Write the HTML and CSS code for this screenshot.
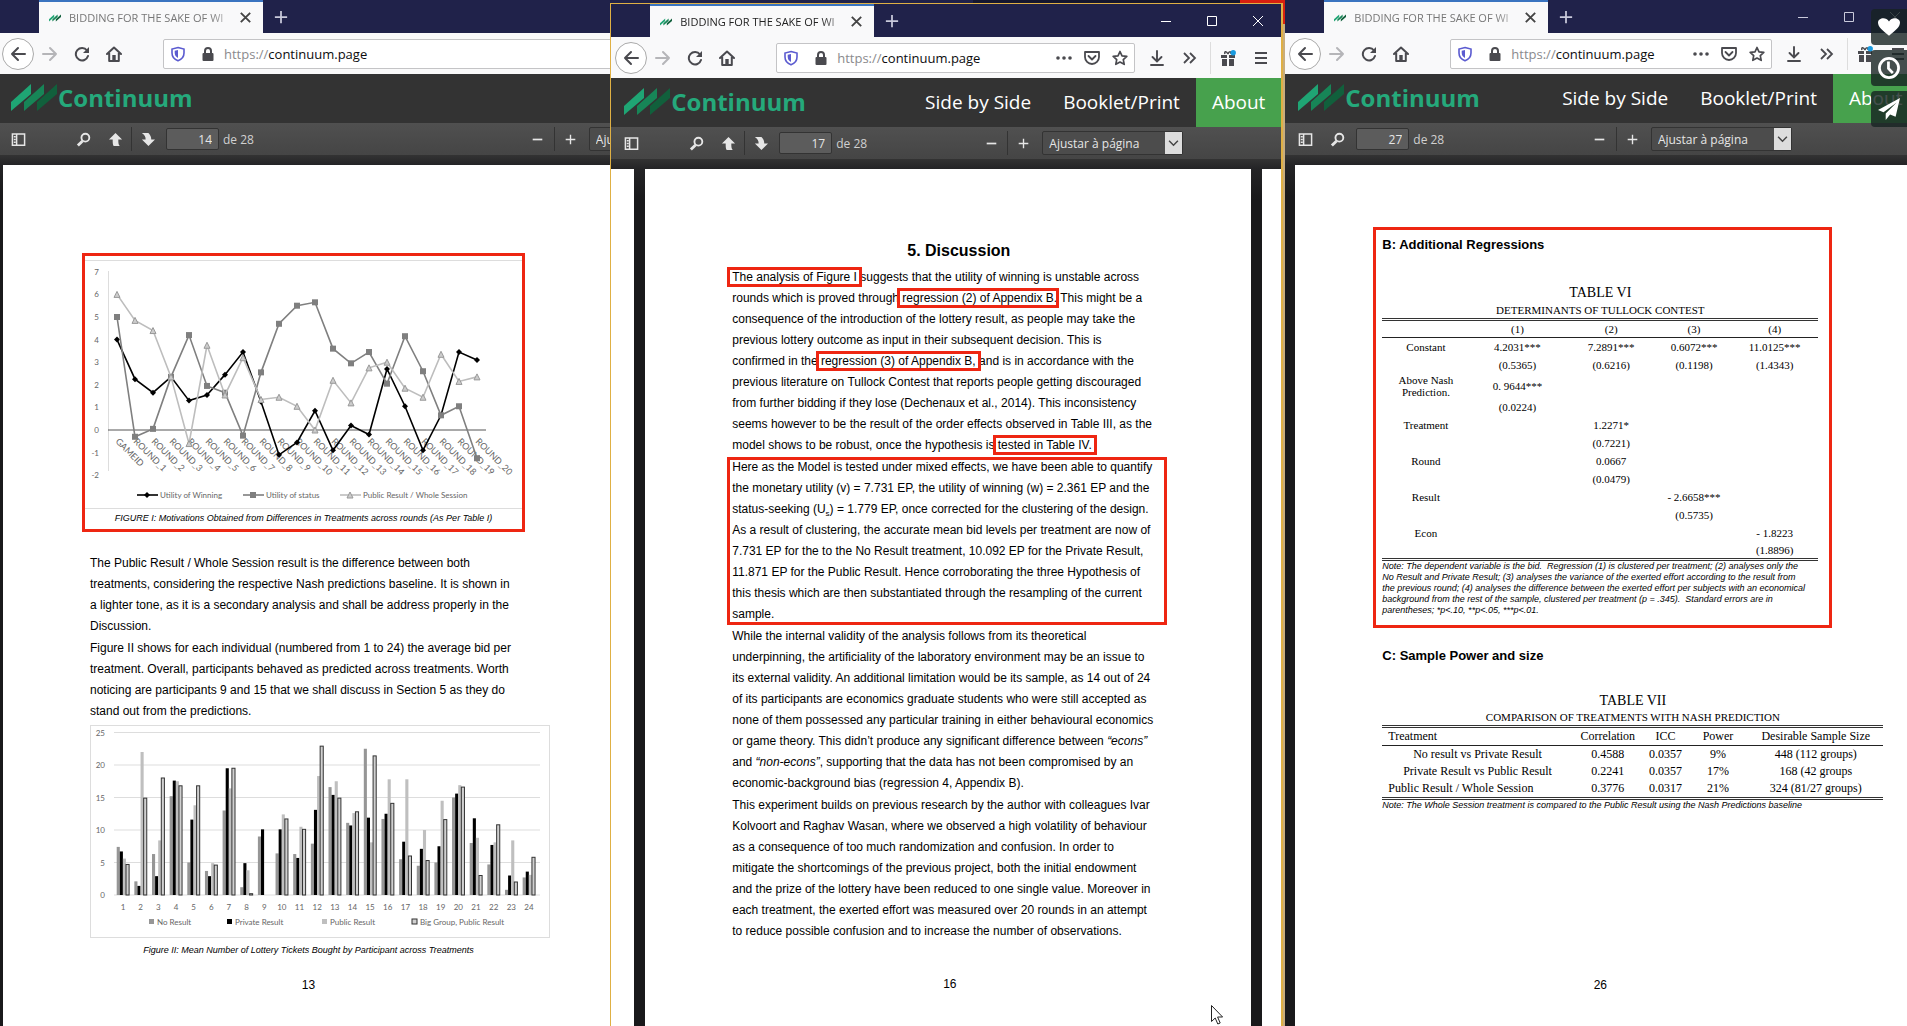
FILE: index.html
```html
<!DOCTYPE html>
<html lang="en">
<head>
  <meta charset="UTF-8">
  <title>Continuum</title>
  <meta name="viewport" content="width=device-width, initial-scale=1.0">
  <link rel="stylesheet" href="styles.css">
</head>
<body>

  <!-- Shared icons -->
  <svg class="sprite" aria-hidden="true">
    <symbol id="i-logo" viewBox="0 0 46 27"><path fill="#1fa574" d="M0 18 20 0v10L0 27z"/><path fill="#178557" d="M13 18 33 0v10L13 27z"/><path fill="#11603c" d="M26 18 46 0v10L26 27z"/></symbol>
    <symbol id="i-back" viewBox="0 0 16 16"><path d="M15 8H2M8 2 2 8l6 6" fill="none" stroke="currentColor" stroke-width="2" stroke-linecap="round" stroke-linejoin="round"/></symbol>
    <symbol id="i-forward" viewBox="0 0 16 16"><path d="M1 8h13M8 2l6 6-6 6" fill="none" stroke="currentColor" stroke-width="2" stroke-linecap="round" stroke-linejoin="round"/></symbol>
    <symbol id="i-reload" viewBox="0 0 16 16"><path d="M13 4.500A6.200 6.200 0 1 0 14 10" fill="none" stroke="currentColor" stroke-width="2" stroke-linecap="round"/><path d="M15 1v6H9z" fill="currentColor"/></symbol>
    <symbol id="i-home" viewBox="0 0 16 16"><path d="M1 8 8 1.500 15 8M3.200 7v8h9.600V7" fill="none" stroke="currentColor" stroke-width="2" stroke-linecap="round" stroke-linejoin="round"/><path d="M6.300 9h3.400v6H6.300z" fill="currentColor"/></symbol>
    <symbol id="i-shield" viewBox="0 0 16 16"><path d="M8 1.500 14 3v4c0 4-2.500 6.500-6 7.800C4.500 13.500 2 11 2 7V3z" fill="none" stroke="currentColor" stroke-width="1.600"/><path d="M8 4v8c-2-1-3.300-2.700-3.300-5V4.700z" fill="currentColor"/></symbol>
    <symbol id="i-lock" viewBox="0 0 16 16"><path d="M5 8V5a3 3 0 0 1 6 0v3" fill="none" stroke="currentColor" stroke-width="2"/><rect x="2.500" y="7" width="11" height="8" rx="1" fill="currentColor"/></symbol>
    <symbol id="i-dots" viewBox="0 0 16 16"><g fill="currentColor"><circle cx="2" cy="8" r="1.800"/><circle cx="8" cy="8" r="1.800"/><circle cx="14" cy="8" r="1.800"/></g></symbol>
    <symbol id="i-pocket" viewBox="0 0 16 16"><path d="M1 2h14v5a7 7 0 0 1-14 0zM4.500 6 8 9.500 11.500 6" fill="none" stroke="currentColor" stroke-width="1.800" stroke-linecap="round" stroke-linejoin="round"/></symbol>
    <symbol id="i-star" viewBox="0 0 16 16"><path d="m8 1.500 2 4.300 4.800.6-3.500 3.200.9 4.700L8 12l-4.200 2.300.9-4.700L1.200 6.400 6 5.800z" fill="none" stroke="currentColor" stroke-width="1.700" stroke-linejoin="round"/></symbol>
    <symbol id="i-download" viewBox="0 0 16 16"><path d="M8 1v10M3.500 7 8 11.500 12.500 7M2 15h12" fill="none" stroke="currentColor" stroke-width="1.900" stroke-linecap="round"/></symbol>
    <symbol id="i-more" viewBox="0 0 16 16"><path d="m3 3 5 5-5 5M9 3l5 5-5 5" fill="none" stroke="currentColor" stroke-width="1.800"/></symbol>
    <symbol id="i-gift" viewBox="0 0 16 16"><path d="M1 5h6v3H1zM9 5h6v3H9zM2 9h5v7H2zM9 9h5v7H9z" fill="currentColor"/><path d="M8 4C6 0 4 2 5 4M8 4c1-3 3-3 3 0" fill="none" stroke="currentColor" stroke-width="1.500"/><circle cx="13.200" cy="2.800" r="2.700" fill="#1a9be0"/></symbol>
    <symbol id="i-menu" viewBox="0 0 16 16"><path d="M2 3h12M2 8h12M2 13h12" stroke="currentColor" stroke-width="1.800"/></symbol>
    <symbol id="i-plus" viewBox="0 0 16 16"><path d="M8 1v14M1 8h14" stroke="currentColor" stroke-width="2"/></symbol>
    <symbol id="i-minus" viewBox="0 0 16 16"><path d="M1 8h14" stroke="currentColor" stroke-width="2.500"/></symbol>
    <symbol id="i-close" viewBox="0 0 16 16"><path d="m3 3 10 10M13 3 3 13" stroke="currentColor" stroke-width="2"/></symbol>
    <symbol id="i-winmin" viewBox="0 0 10 10"><path d="M0 5.500h10" stroke="currentColor"/></symbol>
    <symbol id="i-winmax" viewBox="0 0 10 10"><path d="M.5.5h9v9h-9z" fill="none" stroke="currentColor"/></symbol>
    <symbol id="i-winclose" viewBox="0 0 10 10"><path d="m0 0 10 10M10 0 0 10" stroke="currentColor"/></symbol>
    <symbol id="i-sidebar" viewBox="0 0 16 16"><path d="M1.500 2h13v12h-13zM6 2v12M3 5h2M3 8h2M3 11h2" fill="none" stroke="currentColor" stroke-width="1.600"/></symbol>
    <symbol id="i-search" viewBox="0 0 16 16"><circle cx="10" cy="6" r="4.200" fill="none" stroke="currentColor" stroke-width="2"/><path d="m7 9.500-5 5" stroke="currentColor" stroke-width="3"/></symbol>
    <symbol id="i-up" viewBox="0 0 16 16"><path d="m8 1 7 7h-4c0 3 0 5 1.500 7H6c-1-2-1-4-1-7H1z" fill="currentColor"/></symbol>
    <symbol id="i-down" viewBox="0 0 16 16"><path d="m9 15 7-7h-4c0-3-1-5-3-7H2c3 2 4 4 4 7H2z" fill="currentColor"/></symbol>
    <symbol id="i-chevron" viewBox="0 0 10 10"><path d="m1 3 4 4 4-4" fill="none" stroke="currentColor" stroke-width="1.300"/></symbol>
    <symbol id="i-heart" viewBox="0 0 20 20"><path d="M10 18C4 13 0 10 0 6c0-4 7-6 10-1 3-5 10-3 10 1 0 4-4 7-10 12z" fill="currentColor"/></symbol>
    <symbol id="i-clock" viewBox="0 0 20 20"><circle cx="10" cy="10" r="8.700" fill="none" stroke="currentColor" stroke-width="2.500"/><path d="M9.500 4v6.500l4 4" fill="none" stroke="currentColor" stroke-width="2.500"/></symbol>
    <symbol id="i-plane" viewBox="0 0 20 20"><path d="m20 0-4 17-5-2-4 5v-6L17 4 5 13l-5-2z" fill="currentColor"/></symbol>
  </svg>

  <div class="desktop">

    <!-- Left window -->
    <section class="window window-left">
      <div class="tabstrip">
        <div class="tab">
          <svg class="favicon"><use href="#i-logo"/></svg>
          <span class="tab-title">BIDDING FOR THE SAKE OF WI</span>
          <button class="tab-close" aria-label="Close tab"><svg><use href="#i-close"/></svg></button>
        </div>
        <button class="tab-new" aria-label="New tab"><svg><use href="#i-plus"/></svg></button>
      </div>
      <div class="navbar">
        <button class="nav-btn nav-back" aria-label="Back"><svg><use href="#i-back"/></svg></button>
        <button class="nav-btn nav-off" aria-label="Forward"><svg><use href="#i-forward"/></svg></button>
        <button class="nav-btn" aria-label="Reload"><svg><use href="#i-reload"/></svg></button>
        <button class="nav-btn" aria-label="Home"><svg><use href="#i-home"/></svg></button>
        <div class="urlbar">
          <svg class="shield"><use href="#i-shield"/></svg>
          <svg class="lock"><use href="#i-lock"/></svg>
          <span class="url"><span>https://</span>continuum.page</span>
        </div>
      </div>
      <header class="site-header">
        <a class="brand" href="#"><svg><use href="#i-logo"/></svg>Continuum</a>
      </header>
      <div class="pdfbar">
        <button class="pdf-btn" aria-label="Sidebar"><svg><use href="#i-sidebar"/></svg></button>
        <button class="pdf-btn pdf-find" aria-label="Find"><svg><use href="#i-search"/></svg></button>
        <button class="pdf-btn" aria-label="Previous page"><svg><use href="#i-up"/></svg></button>
        <button class="pdf-btn pdf-split" aria-label="Next page"><svg><use href="#i-down"/></svg></button>
        <label class="page-no"><input type="text" value="14"> de 28</label>
        <span class="grow-before"></span>
        <button class="pdf-btn" aria-label="Zoom out"><svg class="small"><use href="#i-minus"/></svg></button>
        <button class="pdf-btn pdf-split" aria-label="Zoom in"><svg class="small"><use href="#i-plus"/></svg></button>
        <span class="zoom-select"><select aria-label="Zoom"><option>Ajustar à página</option></select><svg><use href="#i-chevron"/></svg></span>
        <span class="grow-after"></span>
      </div>
      <main class="viewer">
        <article class="page page-left">
          <figure class="marked figure-one">
            <svg id="line-chart" viewBox="0 0 437 249" role="img" aria-label="Motivations across rounds"></svg>
            <figcaption>FIGURE I: Motivations Obtained from Differences in Treatments across rounds (As Per Table I)</figcaption>
          </figure>
          <p>The Public Result / Whole Session result is the difference between both<br>
            treatments, considering the respective Nash predictions baseline. It is shown in<br>
            a lighter tone, as it is a secondary analysis and shall be address properly in the<br>
            Discussion.</p>
          <p>Figure II shows for each individual (numbered from 1 to 24) the average bid per<br>
            treatment. Overall, participants behaved as predicted across treatments. Worth<br>
            noticing are participants 9 and 15 that we shall discuss in Section 5 as they do<br>
            stand out from the predictions.</p>
          <figure class="figure-two">
            <svg id="bar-chart" viewBox="0 0 460 213" role="img" aria-label="Lottery tickets per participant"></svg>
            <figcaption>Figure II: Mean Number of Lottery Tickets Bought by Participant across Treatments</figcaption>
          </figure>
          <footer class="folio">13</footer>
        </article>
      </main>
    </section>

    <!-- Right window -->
    <section class="window window-right">
      <div class="tabstrip">
        <div class="tab">
          <svg class="favicon"><use href="#i-logo"/></svg>
          <span class="tab-title">BIDDING FOR THE SAKE OF WI</span>
          <button class="tab-close" aria-label="Close tab"><svg><use href="#i-close"/></svg></button>
        </div>
        <button class="tab-new" aria-label="New tab"><svg><use href="#i-plus"/></svg></button>
        <div class="win-controls">
          <button aria-label="Minimize"><svg><use href="#i-winmin"/></svg></button>
          <button aria-label="Maximize"><svg><use href="#i-winmax"/></svg></button>
          <button aria-label="Close"><svg><use href="#i-winclose"/></svg></button>
        </div>
      </div>
      <div class="navbar">
        <button class="nav-btn nav-back" aria-label="Back"><svg><use href="#i-back"/></svg></button>
        <button class="nav-btn nav-off" aria-label="Forward"><svg><use href="#i-forward"/></svg></button>
        <button class="nav-btn" aria-label="Reload"><svg><use href="#i-reload"/></svg></button>
        <button class="nav-btn" aria-label="Home"><svg><use href="#i-home"/></svg></button>
        <div class="urlbar">
          <svg class="shield"><use href="#i-shield"/></svg>
          <svg class="lock"><use href="#i-lock"/></svg>
          <span class="url"><span>https://</span>continuum.page</span>
          <svg class="url-icon"><use href="#i-dots"/></svg>
          <svg class="url-icon"><use href="#i-pocket"/></svg>
          <svg class="url-icon"><use href="#i-star"/></svg>
        </div>
        <button class="nav-btn" aria-label="Downloads"><svg><use href="#i-download"/></svg></button>
        <button class="nav-btn" aria-label="More tools"><svg><use href="#i-more"/></svg></button>
        <button class="nav-btn nav-gift" aria-label="What's new"><svg><use href="#i-gift"/></svg></button>
        <button class="nav-btn" aria-label="Menu"><svg><use href="#i-menu"/></svg></button>
      </div>
      <header class="site-header">
        <a class="brand" href="#"><svg><use href="#i-logo"/></svg>Continuum</a>
        <nav>
          <a href="#">Side by Side</a>
          <a href="#">Booklet/Print</a>
          <a class="active" href="#">About</a>
        </nav>
      </header>
      <div class="pdfbar">
        <button class="pdf-btn" aria-label="Sidebar"><svg><use href="#i-sidebar"/></svg></button>
        <button class="pdf-btn" aria-label="Find"><svg><use href="#i-search"/></svg></button>
        <label class="page-no"><input type="text" value="27"> de 28</label>
        <span class="grow-before"></span>
        <button class="pdf-btn" aria-label="Zoom out"><svg class="small"><use href="#i-minus"/></svg></button>
        <button class="pdf-btn pdf-split" aria-label="Zoom in"><svg class="small"><use href="#i-plus"/></svg></button>
        <span class="zoom-select"><select aria-label="Zoom"><option>Ajustar à página</option></select><svg><use href="#i-chevron"/></svg></span>
        <span class="grow-after"></span>
      </div>
      <main class="viewer">
        <article class="page page-right">
          <section class="marked regressions">
            <h2>B: Additional Regressions</h2>
            <table class="table-six">
              <caption>TABLE VI<small>DETERMINANTS OF TULLOCK CONTEST</small></caption>
              <colgroup><col class="c20"><col class="c22"><col class="c21"><col class="c17"><col class="c20"></colgroup>
              <thead>
                <tr><th></th><th>(1)</th><th>(2)</th><th>(3)</th><th>(4)</th></tr>
              </thead>
              <tbody>
                <tr><td>Constant</td><td>4.2031***</td><td>7.2891***</td><td>0.6072***</td><td>11.0125***</td></tr>
                <tr><td></td><td>(0.5365)</td><td>(0.6216)</td><td>(0.1198)</td><td>(1.4343)</td></tr>
                <tr class="tall"><td>Above Nash<br>Prediction.</td><td>0. 9644***</td><td></td><td></td><td></td></tr>
                <tr><td></td><td>(0.0224)</td><td></td><td></td><td></td></tr>
                <tr><td>Treatment</td><td></td><td>1.2271*</td><td></td><td></td></tr>
                <tr><td></td><td></td><td>(0.7221)</td><td></td><td></td></tr>
                <tr><td>Round</td><td></td><td>0.0667</td><td></td><td></td></tr>
                <tr><td></td><td></td><td>(0.0479)</td><td></td><td></td></tr>
                <tr><td>Result</td><td></td><td></td><td>- 2.6658***</td><td></td></tr>
                <tr><td></td><td></td><td></td><td>(0.5735)</td><td></td></tr>
                <tr><td>Econ</td><td></td><td></td><td></td><td>- 1.8223</td></tr>
                <tr><td></td><td></td><td></td><td></td><td>(1.8896)</td></tr>
              </tbody>
            </table>
            <p class="note">Note: The dependent variable is the bid.&nbsp; Regression (1) is clustered per treatment; (2) analyses only the<br>
              No Result and Private Result; (3) analyses the variance of the exerted effort according to the result from<br>
              the previous round; (4) analyses the difference between the exerted effort per subjects with an economical<br>
              background from the rest of the sample, clustered per treatment (p = .345).&nbsp; Standard errors are in<br>
              parentheses; *p&lt;.10, **p&lt;.05, ***p&lt;.01.</p>
          </section>
          <section class="power">
            <h2>C: Sample Power and size</h2>
            <table class="table-seven">
              <caption>TABLE VII<small>COMPARISON OF TREATMENTS WITH NASH PREDICTION</small></caption>
              <colgroup><col class="c38"><col class="c14"><col class="c9"><col class="c12"><col class="c27"></colgroup>
              <thead>
                <tr><th class="lead">Treatment</th><th>Correlation</th><th>ICC</th><th>Power</th><th>Desirable Sample Size</th></tr>
              </thead>
              <tbody>
                <tr><td>No result vs Private Result</td><td>0.4588</td><td>0.0357</td><td>9%</td><td>448 (112 groups)</td></tr>
                <tr><td>Private Result vs Public Result</td><td>0.2241</td><td>0.0357</td><td>17%</td><td>168 (42 groups</td></tr>
                <tr><td class="lead">Public Result / Whole Session</td><td>0.3776</td><td>0.0317</td><td>21%</td><td>324 (81/27 groups)</td></tr>
              </tbody>
            </table>
            <p class="note">Note: The Whole Session treatment is compared to the Public Result using the Nash Predictions baseline</p>
          </section>
          <footer class="folio">26</footer>
        </article>
      </main>
    </section>

    <!-- Middle window, on top of the others -->
    <section class="window window-middle">
      <div class="tabstrip">
        <div class="tab">
          <svg class="favicon"><use href="#i-logo"/></svg>
          <span class="tab-title">BIDDING FOR THE SAKE OF WI</span>
          <button class="tab-close" aria-label="Close tab"><svg><use href="#i-close"/></svg></button>
        </div>
        <button class="tab-new" aria-label="New tab"><svg><use href="#i-plus"/></svg></button>
        <div class="win-controls">
          <button aria-label="Minimize"><svg><use href="#i-winmin"/></svg></button>
          <button aria-label="Maximize"><svg><use href="#i-winmax"/></svg></button>
          <button aria-label="Close"><svg><use href="#i-winclose"/></svg></button>
        </div>
      </div>
      <div class="navbar">
        <button class="nav-btn nav-back" aria-label="Back"><svg><use href="#i-back"/></svg></button>
        <button class="nav-btn nav-off" aria-label="Forward"><svg><use href="#i-forward"/></svg></button>
        <button class="nav-btn" aria-label="Reload"><svg><use href="#i-reload"/></svg></button>
        <button class="nav-btn" aria-label="Home"><svg><use href="#i-home"/></svg></button>
        <div class="urlbar">
          <svg class="shield"><use href="#i-shield"/></svg>
          <svg class="lock"><use href="#i-lock"/></svg>
          <span class="url"><span>https://</span>continuum.page</span>
          <svg class="url-icon"><use href="#i-dots"/></svg>
          <svg class="url-icon"><use href="#i-pocket"/></svg>
          <svg class="url-icon"><use href="#i-star"/></svg>
        </div>
        <button class="nav-btn" aria-label="Downloads"><svg><use href="#i-download"/></svg></button>
        <button class="nav-btn" aria-label="More tools"><svg><use href="#i-more"/></svg></button>
        <button class="nav-btn nav-gift" aria-label="What's new"><svg><use href="#i-gift"/></svg></button>
        <button class="nav-btn" aria-label="Menu"><svg><use href="#i-menu"/></svg></button>
      </div>
      <header class="site-header">
        <a class="brand" href="#"><svg><use href="#i-logo"/></svg>Continuum</a>
        <nav>
          <a href="#">Side by Side</a>
          <a href="#">Booklet/Print</a>
          <a class="active" href="#">About</a>
        </nav>
      </header>
      <div class="pdfbar">
        <button class="pdf-btn" aria-label="Sidebar"><svg><use href="#i-sidebar"/></svg></button>
        <button class="pdf-btn pdf-find" aria-label="Find"><svg><use href="#i-search"/></svg></button>
        <button class="pdf-btn" aria-label="Previous page"><svg><use href="#i-up"/></svg></button>
        <button class="pdf-btn pdf-split" aria-label="Next page"><svg><use href="#i-down"/></svg></button>
        <label class="page-no"><input type="text" value="17"> de 28</label>
        <span class="grow-before"></span>
        <button class="pdf-btn" aria-label="Zoom out"><svg class="small"><use href="#i-minus"/></svg></button>
        <button class="pdf-btn pdf-split" aria-label="Zoom in"><svg class="small"><use href="#i-plus"/></svg></button>
        <span class="zoom-select"><select aria-label="Zoom"><option>Ajustar à página</option></select><svg><use href="#i-chevron"/></svg></span>
        <span class="grow-after"></span>
      </div>
      <main class="viewer">
        <div class="page-edge"></div>
        <article class="page page-middle">
          <h1>5. Discussion</h1>
          <p><mark>The analysis of Figure I</mark> suggests that the utility of winning is unstable across<br>
            rounds which is proved through <mark>regression (2) of Appendix B</mark>. This might be a<br>
            consequence of the introduction of the lottery result, as people may take the<br>
            previous lottery outcome as input in their subsequent decision. This is<br>
            confirmed in the <mark>regression (3) of Appendix B,</mark> and is in accordance with the<br>
            previous literature on Tullock Contest that reports people getting discouraged<br>
            from further bidding if they lose (Dechenaux et al., 2014). This inconsistency<br>
            seems however to be the result of the order effects observed in Table III, as the<br>
            model shows to be robust, once the hypothesis is <mark>tested in Table IV.</mark></p>
          <p class="marked-text">Here as the Model is tested under mixed effects, we have been able to quantify<br>
            the monetary utility (v) = 7.731 EP, the utility of winning (w) = 2.361 EP and the<br>
            status-seeking (U<sub>s</sub>) = 1.779 EP, once corrected for the clustering of the design.<br>
            As a result of clustering, the accurate mean bid levels per treatment are now of<br>
            7.731 EP for the to the No Result treatment, 10.092 EP for the Private Result,<br>
            11.871 EP for the Public Result. Hence corroborating the three Hypothesis of<br>
            this thesis which are then substantiated through the resampling of the current<br>
            sample.</p>
          <p>While the internal validity of the analysis follows from its theoretical<br>
            underpinning, the artificiality of the laboratory environment may be an issue to<br>
            its external validity. An additional limitation would be its sample, as 14 out of 24<br>
            of its participants are economics graduate students who were still accepted as<br>
            none of them possessed any particular training in either behavioural economics<br>
            or game theory. This didn’t produce any significant difference between <em>“econs”</em><br>
            and <em>“non-econs”</em>, supporting that the data has not been compromised by an<br>
            economic-background bias (regression 4, Appendix B).</p>
          <p>This experiment builds on previous research by the author with colleagues Ivar<br>
            Kolvoort and Raghav Wasan, where we observed a high volatility of behaviour<br>
            as a consequence of too much randomization and confusion. In order to<br>
            mitigate the shortcomings of the previous project, both the initial endowment<br>
            and the prize of the lottery have been reduced to one single value. Moreover in<br>
            each treatment, the exerted effort was measured over 20 rounds in an attempt<br>
            to reduce possible confusion and to increase the number of observations.</p>
          <footer class="folio">16</footer>
        </article>
        <div class="page-edge"></div>
      </main>
      <svg class="cursor" viewBox="0 0 12 20"><path d="M.5.5v16l3.700-3.500 2.600 6 2.400-1-2.600-6h5z" fill="#fff" stroke="#222"/></svg>
    </section>

    <!-- Video player buttons -->
    <div class="player-buttons">
      <button aria-label="Like"><svg><use href="#i-heart"/></svg></button>
      <button aria-label="Watch later"><svg><use href="#i-clock"/></svg></button>
      <button aria-label="Share"><svg><use href="#i-plane"/></svg></button>
    </div>
  </div>

  <script src="charts.js"></script>
</body>
</html>
```

FILE: styles.css
```css
/* Basic styling */
* {
  box-sizing: border-box;
}
body {
  margin: 0;
  font-family: "Open Sans", sans-serif;
  color: #000;
}
button {
  display: flex;
  align-items: center;
  justify-content: center;
  flex: none;
  padding: 0;
  border: 0;
  background: none;
  color: inherit;
}
svg {
  display: block;
  flex: none;
  width: 16px;
  height: 16px;
}
.sprite {
  position: absolute;
  width: 0;
  height: 0;
}

/* Desktop and its windows */
.desktop {
  position: relative;
  height: 100vh;
  overflow: hidden;
  background:
    linear-gradient(to right, #15172f 65%, transparent 65%),
    linear-gradient(#d8200f 24px, #c9ad7c 24px);
}
.window {
  position: absolute;
  top: 0;
  bottom: 0;
  display: flex;
  flex-direction: column;
  overflow: hidden;
  background: #19191b;
}
.window-left {
  left: 0;
  width: 51%;
}
.window-middle {
  top: 3px;
  left: 32%;
  width: 35.300%;
  border: 1px solid #dfb044;
  border-right-width: 2px;
  border-bottom: 0;
}
.window-right {
  left: 67.400%;
  width: 33.200%;
}

/* Tab strip */
.tabstrip {
  display: flex;
  flex: none;
  height: 33px;
  padding-left: 39px;
  background: #20224a;
  color: #c9cadb;
}
.tab {
  display: flex;
  align-items: center;
  width: 224px;
  padding: 0 10px 0 10px;
  border-top: 2px solid #3a74c0;
  background: #f9f9fa;
  color: #777;
}
.window-middle .tab {
  color: #222;
}
.favicon {
  width: 12px;
  height: 8px;
  margin-right: 8px;
}
.tab-title {
  flex: 1;
  white-space: nowrap;
  font-size: 11px;
  -webkit-mask-image: linear-gradient(to right, #000 85%, rgba(0, 0, 0, 0.2));
  mask-image: linear-gradient(to right, #000 85%, rgba(0, 0, 0, 0.2));
}
.tab-close {
  margin-left: 4px;
  color: #444;
}
.tab-close svg {
  width: 15px;
  height: 15px;
}
.tab-new {
  width: 36px;
}
.tab-new svg {
  width: 14px;
  height: 14px;
}
.win-controls {
  display: flex;
  margin-left: auto;
}
.win-controls button {
  width: 46px;
}
.win-controls svg {
  width: 10px;
  height: 10px;
}
.window-middle .win-controls {
  color: #fff;
}

/* Browser toolbar */
.navbar {
  display: flex;
  align-items: center;
  flex: none;
  height: 41px;
  padding: 0 4px;
  background: #f9f9fa;
  color: #4a4a4f;
}
.window-left .navbar {
  padding-left: 2px;
}
.nav-btn {
  width: 32px;
  height: 32px;
}
.nav-back {
  border: 1px solid #aaa;
  border-radius: 50%;
  background: #fff;
}
.nav-off {
  color: #b5b5b8;
}
.nav-gift {
  width: 35px;
  margin-left: 5px;
  border-left: 1px solid #ddd;
}
.urlbar {
  display: flex;
  align-items: center;
  flex: 1;
  height: 30px;
  margin: 0 6px 0 33px;
  padding: 0 6px;
  border: 1px solid #c4c4c6;
  border-radius: 2px;
  background: #fff;
}
.shield {
  color: #5b5bd0;
}
.lock {
  margin: 0 8px 0 14px;
}
.url {
  flex: 1;
  font-size: 13px;
  color: #0c0c0d;
}
.url span {
  color: #8a8a8d;
}
.url-icon {
  margin-left: 12px;
}

/* Site header */
.site-header {
  display: flex;
  flex: none;
  height: 49px;
  padding-left: 13px;
  background: #333;
}
.window-left .site-header {
  padding-left: 11px;
}
.brand {
  display: flex;
  align-items: center;
  gap: 1px;
  padding-bottom: 2px;
  color: #25a97b;
  font-size: 24px;
  font-weight: 700;
  text-decoration: none;
}
.brand svg {
  width: 46px;
  height: 27px;
}
.site-header nav {
  display: flex;
  margin-left: auto;
}
.site-header nav a {
  padding: 0 16px;
  color: #fff;
  font-size: 19px;
  line-height: 48px;
  text-decoration: none;
}
.site-header nav .active {
  background: #47a14d;
}

/* PDF toolbar */
.pdfbar {
  display: flex;
  align-items: center;
  flex: none;
  height: 32px;
  padding-left: 4px;
  background: linear-gradient(#505050, #454545);
  color: #e6e6e6;
  font-size: 13px;
}
.window-left .pdfbar {
  padding-left: 2px;
}
.pdf-btn {
  width: 32px;
  height: 24px;
}
.pdf-btn svg {
  width: 15px;
  height: 15px;
}
.pdf-btn .small {
  width: 11px;
  height: 11px;
}
.pdf-find {
  margin-left: 33px;
}
.pdf-split {
  border-left: 1px solid #333;
}
.page-no {
  display: flex;
  align-items: center;
  gap: 4px;
  margin-left: 3px;
  color: #d0d0d0;
  font-size: 12px;
}
.page-no input {
  width: 53px;
  height: 22px;
  padding: 0 6px;
  border: 1px solid #333;
  border-radius: 2px;
  background: #5c5c5c;
  color: #e6e6e6;
  font: 12px "Open Sans", sans-serif;
  text-align: right;
}
.grow-before {
  flex: 117 1 0;
}
.grow-after {
  flex: 106 1 0;
}
.zoom-select {
  position: relative;
  margin-left: 3px;
}
.zoom-select select {
  display: block;
  width: 141px;
  height: 24px;
  padding: 0 6px;
  border: 1px solid #333;
  border-radius: 2px;
  appearance: none;
  background: #4c4c4c;
  color: #e6e6e6;
  font: 12px "Open Sans", sans-serif;
}
.zoom-select svg {
  position: absolute;
  top: 1px;
  right: 1px;
  width: 17px;
  height: 22px;
  padding: 0 3px;
  background: #ddd;
  color: #444;
  pointer-events: none;
}

/* PDF pages */
.viewer {
  display: flex;
  flex: 1;
  gap: 11px;
  padding: 10px 2px 0 3px;
  background: linear-gradient(#333 0, #242426 10px, #19191b 40px);
}
.window-right .viewer {
  padding: 10px 11px 0 10px;
}
.window-middle .viewer {
  padding: 10px 0 0;
}
.page {
  flex: 1;
  background: #fff;
  font-family: "Liberation Sans", Arial, sans-serif;
  font-size: 12px;
  line-height: 21px;
  white-space: nowrap;
}
.page-edge {
  flex: none;
  width: 23px;
  background: #fff;
}
.page-edge:last-child {
  width: 19px;
}
.page p {
  margin: 0 0 1px;
}
.page figure {
  margin: 0;
}
.page figcaption {
  font-size: 9px;
  font-style: italic;
  text-align: center;
  line-height: 18px;
}
.folio {
  text-align: center;
}

/* Red highlights */
.marked {
  border: 3px solid #ee2612;
}
.page .marked-text {
  margin-left: -5px;
  padding-left: 5px;
  outline: 3px solid #ee2612;
  outline-offset: -3px;
}
mark {
  margin: 0 -2px;
  padding: 0 2px;
  background: none;
  color: inherit;
  outline: 3px solid #ee2612;
}

/* Left page */
.page-left {
  flex: none;
  width: 612px;
  padding: 88px 0 0 87px;
}
.page .figure-one {
  width: 443px;
  height: 279px;
  margin: 0 0 21px -8px;
  padding-top: 4px;
}
.figure-one svg {
  width: 437px;
  height: 249px;
}
.figure-two {
  width: 460px;
  padding-top: 2px;
}
.figure-two svg {
  width: 460px;
  height: 213px;
}
.figure-two figcaption {
  width: 437px;
  line-height: 24px;
}
.page-left .folio {
  width: 437px;
  padding-top: 13px;
}

/* Middle page */
.page-middle {
  padding: 71px 84px 0 87px;
}
.page-middle h1 {
  margin: 0 0 5px;
  padding-left: 18px;
  font-size: 16px;
  line-height: 22px;
  text-align: center;
}
.page-middle sub {
  font-size: 8px;
  line-height: 0;
}
.page-middle .folio {
  padding-top: 31px;
}

/* Right page */
.page-right {
  padding: 62px 24px 0 78px;
}
.page-right h2 {
  margin: 0;
  font-size: 13px;
  line-height: 20px;
}
.regressions {
  width: 459px;
  padding: 5px 11px 9px 6px;
}
.power {
  padding: 18px 0 0 9px;
}
.page-right table {
  width: 100%;
  border-collapse: collapse;
  table-layout: fixed;
  border-bottom: 3px double #333;
  font-family: "Liberation Serif", "Times New Roman", serif;
  text-align: center;
}
.page-right caption {
  font-size: 14px;
  line-height: 20px;
}
.page-right caption small {
  display: block;
  font-size: 11px;
  line-height: 15px;
}
.page-right thead {
  border-top: 3px double #333;
  border-bottom: 1px solid #222;
}
.page-right th {
  font-weight: normal;
}
.page-right th,
.page-right td {
  padding: 0;
}
.table-six {
  margin-top: 28px;
  font-size: 11px;
  line-height: 12px;
}
.table-six tr {
  height: 18px;
}
.table-six .tall {
  height: 24px;
}
.table-seven {
  margin-top: 26px;
  font-size: 12px;
  line-height: 17px;
}
.page-right .table-seven caption {
  line-height: 18px;
}
.table-seven .lead {
  padding-left: 6px;
  text-align: left;
}
.c9 { width: 9%; }
.c12 { width: 12%; }
.c14 { width: 14%; }
.c17 { width: 17%; }
.c20 { width: 20%; }
.c21 { width: 21%; }
.c22 { width: 22%; }
.c27 { width: 27%; }
.c38 { width: 38%; }
.page .note {
  margin: 0;
  font-size: 9px;
  font-style: italic;
  line-height: 11px;
}
.page-right .folio {
  width: 454px;
  padding-top: 164px;
}

/* Charts */
.chart-text {
  fill: #666;
  font-family: Lato, sans-serif;
  font-size: 8px;
}
.chart-round {
  font-size: 9px;
}
.chart-label {
  text-anchor: middle;
}
.chart-frame {
  fill: none;
  stroke: #ddd;
}
.grid-line {
  stroke: #ddd;
}
.axis-line {
  stroke: #555;
}

/* Overlays */
.cursor {
  position: absolute;
  right: 58px;
  bottom: 1px;
  width: 12px;
  height: 20px;
}
.player-buttons {
  position: absolute;
  top: 9px;
  right: 0;
  display: flex;
  flex-direction: column;
  gap: 5px;
}
.player-buttons button {
  width: 36px;
  height: 36px;
  border-radius: 4px 0 0 4px;
  background: rgba(23, 35, 34, 0.8);
  color: #fff;
}
.player-buttons svg {
  width: 22px;
  height: 22px;
}
```

FILE: charts.js
```js
// Figure I: three series over the rounds
const series = [
  { name: 'Utility of Winning', color: '#000', mark: 'diamond', legendX: 52,
    values: [4, 2.25, 1.65, 2.35, 1.3, 1.55, 2.45, 3.45, 1.25, -1.1, -0.55, 0.85, -0.9, 0.2, -0.2, 2.7, 1.05, -0.9, 0.65, 3.45, 3.1] },
  { name: 'Utility of status', color: '#7f7f7f', mark: 'square', legendX: 158,
    values: [5, -0.3, 0.05, 2.35, 4.2, 1.95, 1.65, -0.25, 2.55, 4.7, 5.5, 5.65, 3.6, 2.95, 3.45, 2.05, 4.15, 2.6, 0.65, 1.05, -1.25] },
  { name: 'Public Result / Whole Session', color: '#bdbdbd', mark: 'triangle', legendX: 255,
    values: [6, 4.85, 4.4, 2.35, -0.6, 3.75, 1.55, 3.2, 1.35, 1.45, 1.05, 0, 2.2, 1.2, 2.75, 3, 1.85, 1.45, 3.35, 2.15, 2.35] }
];

function marker(type, x, y, color) {
  if (type === 'diamond') return `<path d="M${x} ${y - 3}l3 3-3 3-3-3z" fill="${color}"/>`;
  if (type === 'square') return `<rect x="${x - 3}" y="${y - 3}" width="6" height="6" fill="${color}"/>`;
  return `<path d="M${x} ${y - 3}l3 6h-6z" fill="#ccc" stroke="#999"/>`;
}

function drawLines() {
  const px = i => 32 + i * 18;
  const py = v => 170 - v * 22.6;
  let out = '<path class="chart-frame" d="M0 .5h437M0 248.500h437M23.500 11v200"/>';
  out += `<path class="axis-line" d="M23 ${py(0)}h378"/>`;
  for (let v = -2; v <= 7; v++) {
    out += `<text class="chart-text" x="14" y="${py(v) + 3}" text-anchor="end">${v}</text>`;
  }
  for (let i = 0; i <= 20; i++) {
    const label = i === 0 ? 'GAMEID' : 'ROUND_' + i;
    out += `<text class="chart-text chart-round" transform="translate(${px(i) - 2} ${py(0) + 12}) rotate(45)">${label}</text>`;
  }
  series.forEach(s => {
    const points = s.values.map((v, i) => px(i) + ',' + py(v)).join(' ');
    out += `<polyline points="${points}" fill="none" stroke="${s.color}" stroke-width="1.600"/>`;
    s.values.forEach((v, i) => { out += marker(s.mark, px(i), py(v), s.color); });
    out += `<path d="M${s.legendX} 235h21" stroke="${s.color}" stroke-width="1.600"/>`;
    out += marker(s.mark, s.legendX + 10, 235, s.color);
    out += `<text class="chart-text" x="${s.legendX + 23}" y="238">${s.name}</text>`;
  });
  document.getElementById('line-chart').innerHTML = out;
}

// Figure II: four bars for each participant
const bars = [
  [7.4, 6.7, 5.6, 4.7], [2.1, 1.4, 22, 14.9], [6.3, 2.9, 8.4, 18], [15.2, 17.6, 17.5, 16.8],
  [5, 11.6, 13.8, 16.8], [3.7, 2.9, 4.9, 4.6], [13, 19.5, 16.4, 19.5], [1.2, 4.9, 3.8, 0.2],
  [9, 10.1, 0, 0], [6.4, 10.1, 12.4, 11.7], [6.3, 5.7, 10.5, 10.1], [7.9, 13.1, 18.3, 22.9],
  [16.6, 15.4, 17.5, 14.9], [11.1, 10.7, 12.6, 12.8], [22.5, 11.9, 8.1, 21.4], [11.7, 12.5, 17.8, 14.1],
  [5.5, 8.2, 17.8, 6], [4.5, 7.1, 10, 5.3], [5, 7.5, 14.5, 11.6], [15, 15.6, 16.9, 16.6],
  [8, 11.8, 8.8, 3], [4.7, 7.7, 8.1, 10.8], [0.8, 3, 8.4, 2], [2.7, 3.6, 3.1, 5.8]
];
const fills = ['#969696', '#000', '#bfbfbf', '#d0d0d0'];
const barLegend = [[59, 'No Result'], [137, 'Private Result'], [232, 'Public Result'], [322, 'Big Group, Public Result']];

function drawBars() {
  let out = '<rect class="chart-frame" x=".5" y=".5" width="459" height="212"/>';
  for (let v = 0; v <= 25; v += 5) {
    const y = 170 - v * 6.5;
    out += `<path class="grid-line" d="M24 ${y}h426"/>`;
    out += `<text class="chart-text" x="15" y="${y + 3}" text-anchor="end">${v}</text>`;
  }
  bars.forEach((group, i) => {
    const cx = 33 + i * 17.65;
    group.forEach((v, k) => {
      if (!v) return;
      const edge = k === 3 ? ' stroke="#333"' : '';
      out += `<rect x="${cx - 6.3 + k * 3.1}" y="${170 - v * 6.5}" width="3.100" height="${v * 6.5}" fill="${fills[k]}"${edge}/>`;
    });
    out += `<text class="chart-text chart-label" x="${cx}" y="185">${i + 1}</text>`;
  });
  barLegend.forEach(([x, name], k) => {
    const edge = k === 3 ? ' stroke="#333"' : '';
    out += `<rect x="${x}" y="194" width="5" height="5" fill="${fills[k]}"${edge}/>`;
    out += `<text class="chart-text" x="${x + 8}" y="200">${name}</text>`;
  });
  document.getElementById('bar-chart').innerHTML = out;
}

drawLines();
drawBars();
```
